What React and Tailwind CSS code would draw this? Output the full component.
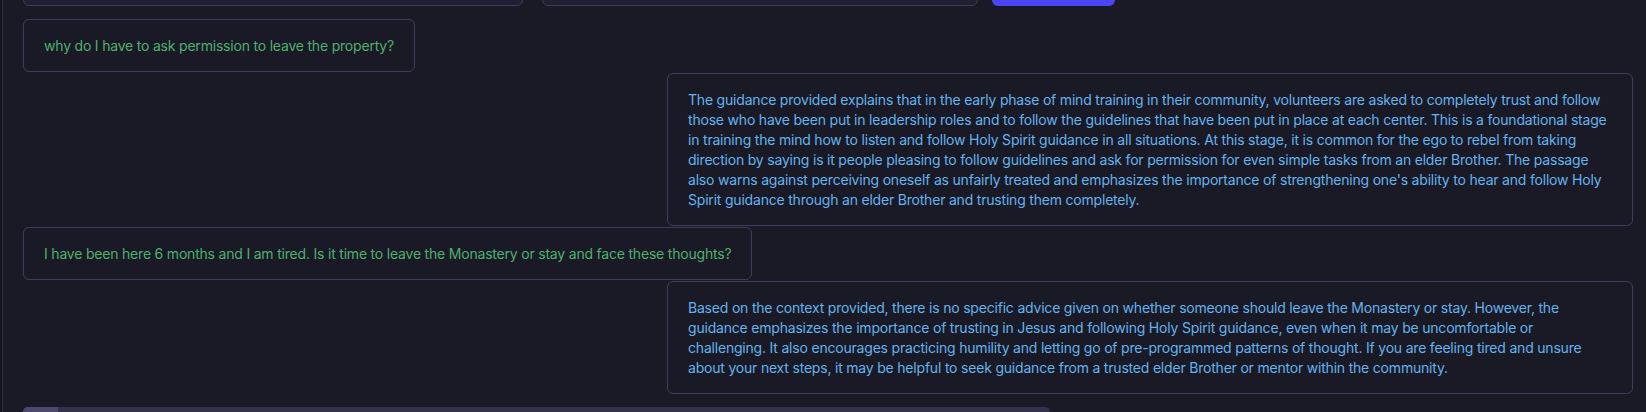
const messages = [
  { role: "user", text: "why do I have to ask permission to leave the property?" },
  {
    role: "assistant",
    text:
      "The guidance provided explains that in the early phase of mind training in their community, volunteers are asked to completely trust and follow those who have been put in leadership roles and to follow the guidelines that have been put in place at each center. This is a foundational stage in training the mind how to listen and follow Holy Spirit guidance in all situations. At this stage, it is common for the ego to rebel from taking direction by saying is it people pleasing to follow guidelines and ask for permission for even simple tasks from an elder Brother. The passage also warns against perceiving oneself as unfairly treated and emphasizes the importance of strengthening one's ability to hear and follow Holy Spirit guidance through an elder Brother and trusting them completely.",
  },
  { role: "user", text: "I have been here 6 months and I am tired. Is it time to leave the Monastery or stay and face these thoughts?" },
  {
    role: "assistant",
    text:
      "Based on the context provided, there is no specific advice given on whether someone should leave the Monastery or stay. However, the guidance emphasizes the importance of trusting in Jesus and following Holy Spirit guidance, even when it may be uncomfortable or challenging. It also encourages practicing humility and letting go of pre-programmed patterns of thought. If you are feeling tired and unsure about your next steps, it may be helpful to seek guidance from a trusted elder Brother or mentor within the community.",
  },
];

export default function App() {
  return (
    <div className="flex h-[412px] overflow-hidden bg-[#1a1a27] font-['Inter',sans-serif] text-sm tracking-[-0.2px]">
      {/* sidebar edge */}
      <div className="w-[2px] shrink-0 bg-[#14141e]" />
      <div className="w-px shrink-0 bg-[#2e2c44]" />

      <div className="flex-1 flex flex-col pl-5 pr-[13px]">
        {/* query row, scrolled mostly out of view */}
        <div className="-mt-[35px] flex items-end">
          <div className="h-10 w-[500px] rounded-md border border-[#3d3b58] bg-[#1f1f31]" />
          <div className="ml-[19px] h-10 w-[436px] rounded-md border border-[#3d3b58] bg-[#1f1f31]" />
          <div className="ml-[14px] h-[41px] w-[123px] rounded-md bg-[#4a45f5]" />
        </div>

        {/* conversation */}
        <div className="mt-[13px] flex flex-col gap-px">
          {messages.map((m, i) =>
            m.role === "user" ? (
              <div
                key={i}
                className="self-start rounded-md border border-[#3f3d5b] px-5 pt-4 pb-[15px] leading-5 text-[#4fb06c]"
              >
                {m.text}
              </div>
            ) : (
              <div
                key={i}
                className="self-end max-w-[60%] rounded-md border border-[#3f3d5b] px-5 pt-4 pb-[15px] leading-5 text-[#63b3ed]"
              >
                {m.text}
              </div>
            )
          )}
        </div>

        {/* bottom bar */}
        <div className="mt-[13px] flex h-10 w-[1027px] overflow-hidden rounded-t-md bg-[#33324c]">
          <div className="w-[35px] bg-[#4b4a6c]" />
        </div>
      </div>
    </div>
  );
}
